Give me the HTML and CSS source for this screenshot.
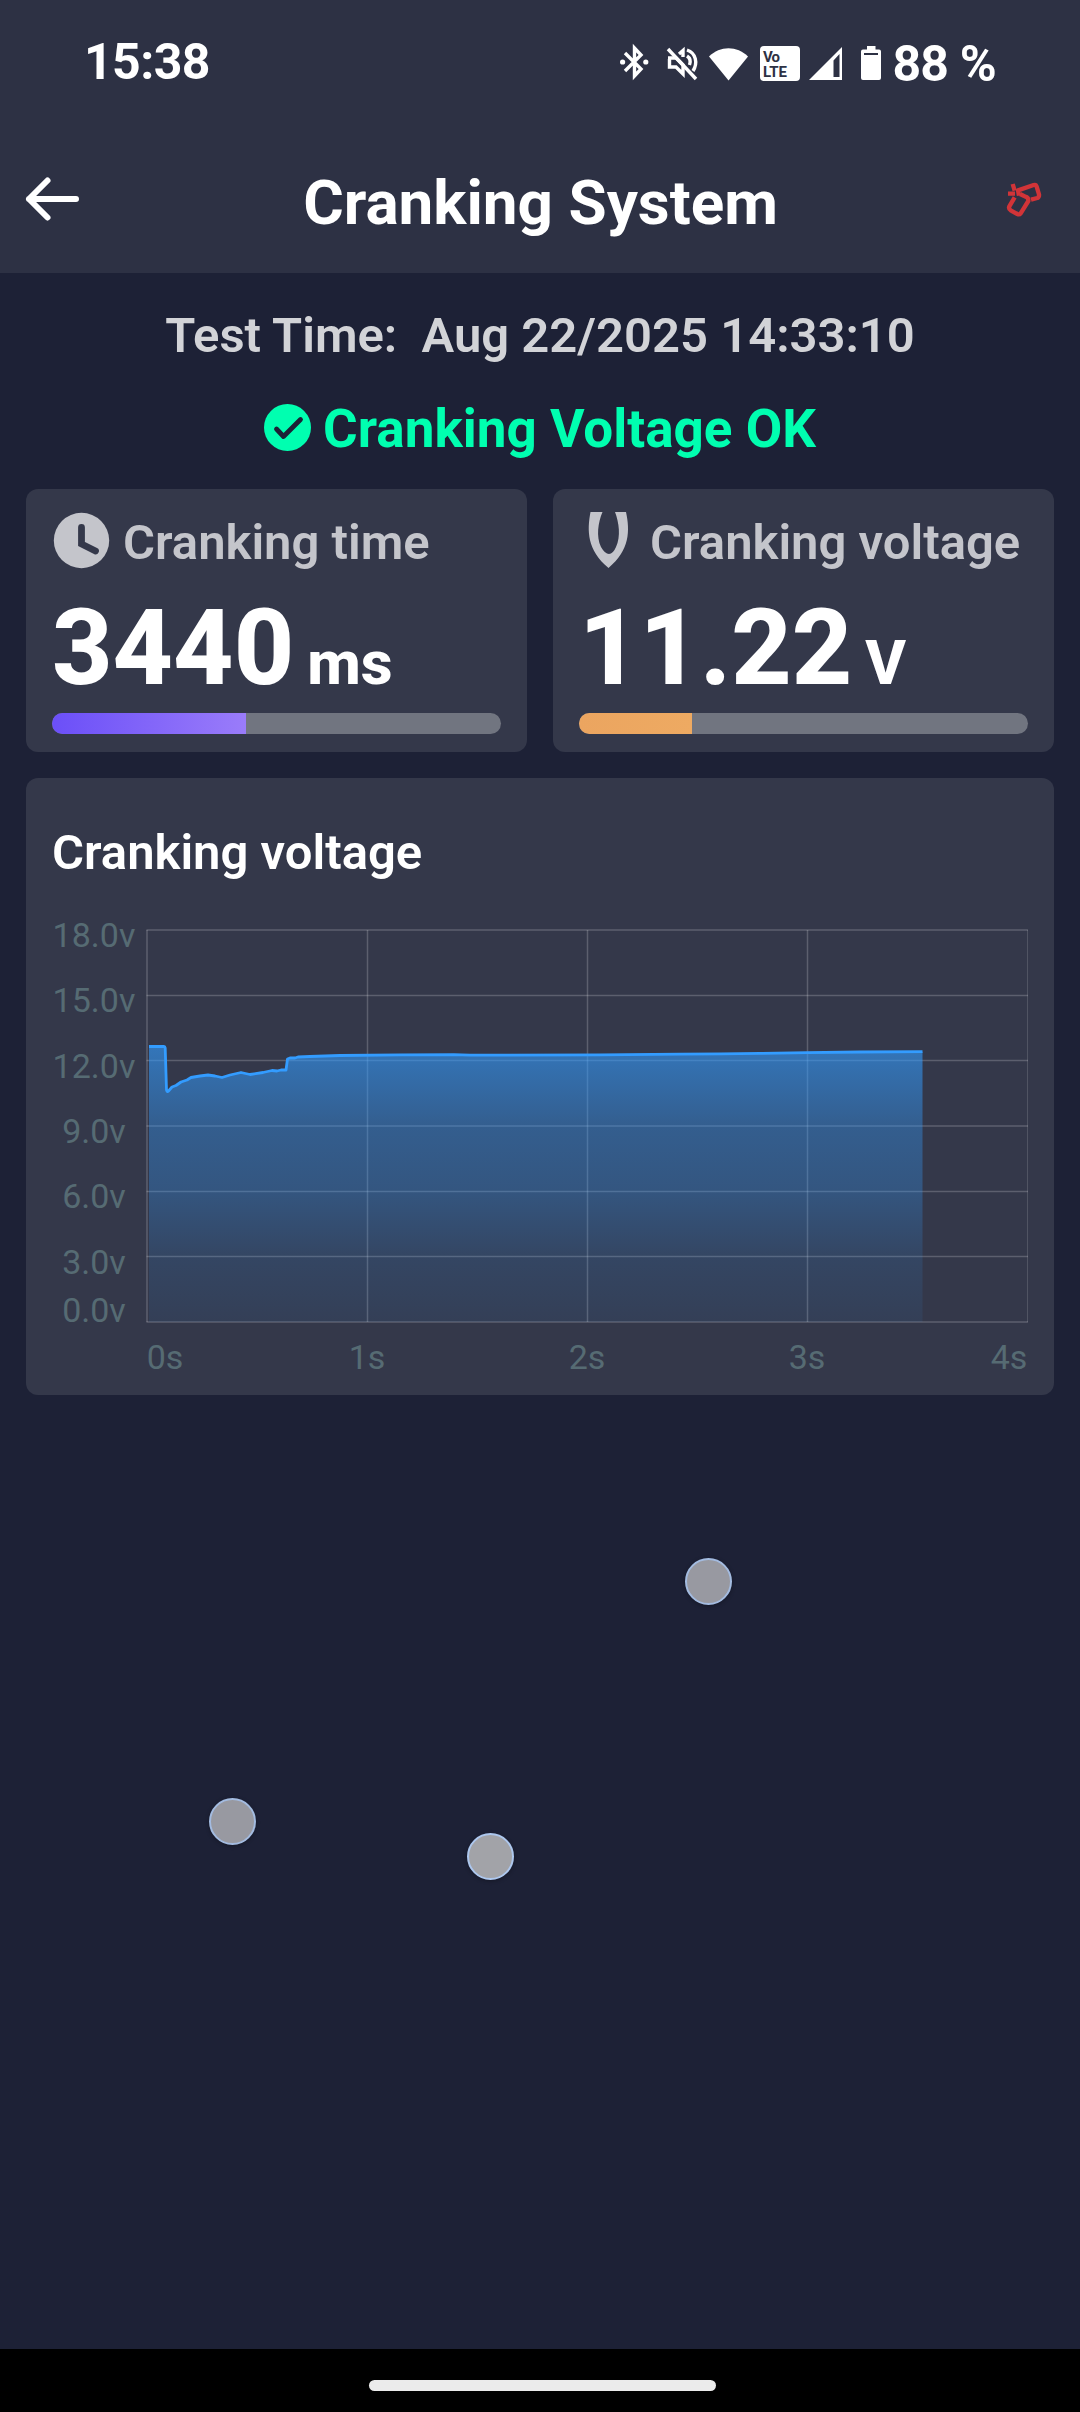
FILE: index.html
```html
<!DOCTYPE html>
<html lang="en">

<head>
    <meta charset="UTF-8">
    <meta name="viewport" content="width=device-width, initial-scale=1.0">
    <title>Cranking System</title>
    <link rel="stylesheet" href="styles.css">
</head>

<body>
    <div class="screen">
        <!-- Phone status bar -->
        <div class="status-bar">
            <span class="clock">15:38</span>
            <svg class="status-icons" viewBox="0 0 270 40" fill="#fff">
                <!-- Bluetooth -->
                <g fill="none" stroke="#fff" stroke-width="3.400">
                    <path d="M5 11 L21 27 L14.5 34 V6 L21 13 L5 29" />
                </g>
                <circle cx="2.6" cy="20" r="2.6" />
                <circle cx="25.8" cy="20" r="2.6" />
                <!-- Muted -->
                <g fill="none" stroke="#fff" stroke-width="3.400">
                    <path d="M48 7 L76 37" />
                    <path d="M48 16 H56 L63 23 V32 L56 25 H49.5 V17" />
                    <path d="M59 12 L63 8.5 V15" />
                    <path d="M67 8 C76 11 78 21 73 29" />
                    <path d="M67 14 C70 16 71 19 69.500 23" />
                </g>
                <!-- Wifi -->
                <path d="M89 14.500 C100 3.500 117 3.500 128 14.500 L108.500 38.500 Z" />
                <!-- VoLTE -->
                <rect x="140" y="4" width="40" height="35" rx="4" />
                <g class="volte">
                    <text x="143" y="19.500" textLength="17">Vo</text>
                    <text x="143" y="35" textLength="24">LTE</text>
                </g>
                <!-- Signal -->
                <path fill-rule="evenodd" d="M222 5 V38 H189 Z M219.500 12 L213.500 18.500 V35 H219.500 Z" />
                <!-- Battery -->
                <path fill-rule="evenodd" d="M247 4 H255.500 V7.500 H259 Q261 7.500 261 9.500 V36 Q261 38 259 38 H243 Q241 38 241 36 V9.500 Q241 7.500 243 7.500 H247 Z M244 11 V13 H258 V11 Z" />
            </svg>
            <span class="battery">88 %</span>
        </div>

        <!-- Title bar -->
        <div class="title-bar">
            <svg class="back" viewBox="0 0 56 46" fill="none" stroke="#fff" stroke-width="6" stroke-linecap="round" stroke-linejoin="round">
                <path d="M23.500 4.500 L5 23 L23.500 41.500 M5 23 H52" />
            </svg>
            <h1>Cranking System</h1>
            <svg class="plug" viewBox="78 64 108 108" fill="none" stroke="#d13438" stroke-width="13" stroke-linejoin="round">
                <path d="M117 108 L114 92 L161 76 Q168 74 170 81 L177 104 Q178 112 172 115 L153 120" />
                <path d="M104 113 L88 140 Q85 147 92 152 L112 163 Q118 166 122 161 L145 124 Q146 113 136 111 L120 103" />
                <path d="M98 73 L104 93 M84 102 H105" />
            </svg>
        </div>

        <div class="content">
            <div class="test-time">Test Time:&nbsp; Aug 22/2025 14:33:10</div>

            <div class="result">
                <svg viewBox="0 0 47 47">
                    <circle cx="23.500" cy="23.500" r="23.500" fill="#00ffb0" />
                    <path d="M12.500 25 L19.500 32.500 L36.500 15.500" fill="none" stroke="#1d2136" stroke-width="4.800" stroke-linecap="round" stroke-linejoin="round" />
                </svg>
                <span>Cranking Voltage OK</span>
            </div>

            <div class="cards">
                <div class="card">
                    <div class="card-title">
                        <svg viewBox="0 0 60 60">
                            <circle cx="29.500" cy="28.500" r="27.700" fill="#c4c5cb" />
                            <path d="M29.500 15.500 V32 L43.500 39" fill="none" stroke="#34384a" stroke-width="6.800" stroke-linecap="round" />
                        </svg>
                        <span>Cranking time</span>
                    </div>
                    <div class="value">3440<span class="unit">ms</span></div>
                    <div class="bar">
                        <div class="fill purple" style="width: 43.200%"></div>
                    </div>
                </div>

                <div class="card">
                    <div class="card-title">
                        <svg viewBox="0 0 60 60">
                            <path d="M11.500 0 H23.500 C19 10.500 17 24.500 22 35 Q26 42 30 42 Q34 42 37 35 C42 24.500 40 10.500 36 0 H47 C51 18.500 51 38 29.500 56 C8 38 8 18.500 11.500 0 Z" fill="#c4c5cb" />
                        </svg>
                        <span>Cranking voltage</span>
                    </div>
                    <div class="value">11.22<span class="unit">V</span></div>
                    <div class="bar">
                        <div class="fill orange" style="width: 25.200%"></div>
                    </div>
                </div>
            </div>

            <div class="card chart-card">
                <h2>Cranking voltage</h2>
                <svg class="chart" viewBox="26 900 1028 494">
                    <defs>
                        <linearGradient id="area" gradientUnits="userSpaceOnUse" x1="0" y1="1046" x2="0" y2="1322">
                            <stop offset="0" stop-color="#339cff" stop-opacity="0.620" />
                            <stop offset="0.290" stop-color="#339cff" stop-opacity="0.380" />
                            <stop offset="0.520" stop-color="#339cff" stop-opacity="0.300" />
                            <stop offset="0.760" stop-color="#339cff" stop-opacity="0.140" />
                            <stop offset="1" stop-color="#339cff" stop-opacity="0.070" />
                        </linearGradient>
                    </defs>
                    <g class="grid">
                        <path d="M146.500 930 H1028 M146.500 995.500 H1028 M146.500 1060.500 H1028 M146.500 1126 H1028 M146.500 1191.500 H1028 M146.500 1256.500 H1028 M146.500 1322 H1028" />
                        <path d="M147 930 V1322 M367.500 930 V1322 M587.500 930 V1322 M807.500 930 V1322" />
                        <path class="edge" d="M1027.500 930 V1322" />
                    </g>
                    <path fill="url(#area)" d="M149 1322 V1046.500 H165 L167 1092 L172 1087 L181 1082 L191 1077.500 L200 1076 L208 1075 L215 1076 L222 1077.500 L230 1075 L241 1072.500 L250 1074.500 L263 1072.500 L272 1070.500 L277 1071 L286 1070 L288 1058.500 L310 1056.500 L340 1055.500 L460 1055 L620 1054.500 L720 1053.500 L807 1052.700 L922.500 1051.800 V1322 Z" />
                    <path class="line" d="M149 1046.500 H164 Q165 1046.500 165.200 1048 L166.500 1090 Q167 1092.500 168.500 1091 L172 1087 L176 1085.500 L181 1082 L187 1080 L191 1077.500 L200 1076 L208 1075 L215 1076 L222 1077.500 L230 1075 L241 1072.500 L250 1074.500 L263 1072.500 L272 1070.500 L277 1071 L281 1070 L286 1070 L287.500 1059 L290 1058 L295 1058 L298 1057 L310 1056.500 L340 1055.500 L400 1054.800 L454 1054.600 L470 1055.200 L600 1054.800 L680 1054.200 L720 1053.800 L760 1053.400 L807 1052.700 L860 1052 L922.500 1051.600" />
                    <g class="labels">
                        <text x="94" y="947">18.0v</text>
                        <text x="94" y="1012">15.0v</text>
                        <text x="94" y="1078">12.0v</text>
                        <text x="94" y="1143">9.0v</text>
                        <text x="94" y="1208">6.0v</text>
                        <text x="94" y="1274">3.0v</text>
                        <text x="94" y="1322">0.0v</text>
                        <text x="165" y="1369">0s</text>
                        <text x="367" y="1369">1s</text>
                        <text x="587" y="1369">2s</text>
                        <text x="807" y="1369">3s</text>
                        <text x="1009" y="1369">4s</text>
                    </g>
                </svg>
            </div>
        </div>

        <!-- Gesture bar -->
        <div class="nav-bar">
            <div class="handle"></div>
        </div>

        <!-- Touch pointers over the page -->
        <div class="touch touch-1"></div>
        <div class="touch touch-2"></div>
        <div class="touch touch-3"></div>
    </div>
</body>

</html>
```

FILE: styles.css
```css
* {
    box-sizing: border-box;
}

body {
    margin: 0;
    background: #1d2136;
    color: #fff;
    font-family: Roboto, "Liberation Sans", sans-serif;
}

svg {
    display: block;
    flex: none;
}

.screen {
    position: relative;
    display: flex;
    flex-direction: column;
    width: 1080px;
    height: 2412px;
    overflow: hidden;
}

/* Status bar */
.status-bar {
    display: flex;
    align-items: center;
    height: 124px;
    padding: 0 84px 0 84px;
    background: #2d3144;
    font-size: 50px;
    font-weight: 700;
    letter-spacing: -0.6px;
}

.battery {
    padding-top: 3px;
    letter-spacing: -0.8px;
}

.status-icons {
    width: 270px;
    height: 40px;
    margin-left: auto;
    margin-right: 2px;
    letter-spacing: 0;
}

.volte {
    fill: #2d3144;
    font-size: 15px;
    font-weight: 700;
}

/* Title bar */
.title-bar {
    display: flex;
    align-items: center;
    justify-content: space-between;
    height: 149px;
    padding: 0 38px 0 24px;
    background: #2d3144;
}

.title-bar h1 {
    margin: 7px 5px 0 0;
    font-size: 62px;
    font-weight: 700;
}

.back {
    width: 56px;
    height: 46px;
}

.plug {
    width: 36px;
    height: 36px;
}

/* Content */
.content {
    flex: 1;
    padding: 0 26px;
}

.test-time {
    margin-top: 34px;
    height: 58px;
    line-height: 58px;
    text-align: center;
    color: #d2d3d7;
    font-size: 49px;
    font-weight: 650;
}

.result {
    display: flex;
    justify-content: center;
    align-items: center;
    gap: 12px;
    margin-top: 34px;
    height: 60px;
    color: #00ffb0;
    font-size: 53px;
    font-weight: 680;
}

.result svg {
    width: 47px;
    height: 47px;
    margin-bottom: 4px;
}

.cards {
    display: grid;
    grid-template-columns: 1fr 1fr;
    gap: 26px;
    margin-top: 30px;
}

.card {
    height: 263px;
    padding: 21px 26px 0;
    border-radius: 12px;
    background: #34384a;
}

.card-title {
    display: flex;
    align-items: center;
    gap: 11px;
    height: 64px;
    color: #c4c5cb;
    font-size: 49px;
    font-weight: 650;
    white-space: nowrap;
}

.card-title svg {
    width: 60px;
    height: 60px;
}

.value {
    height: 124px;
    padding-top: 13px;
    line-height: 124px;
    font-size: 105px;
    font-weight: 850;
}

.unit {
    margin-left: 13px;
    font-size: 62px;
}

.bar {
    height: 21px;
    margin-top: 15px;
    border-radius: 10.5px;
    background: #717580;
    overflow: hidden;
}

.fill {
    height: 100%;
}

.purple {
    background: linear-gradient(to right, #6b4ff8, #9a7cfa);
}

.orange {
    background: linear-gradient(to right, #eba560, #eeaa62);
}

/* Chart */
.chart-card {
    height: 617px;
    margin-top: 26px;
    padding: 0;
}

.chart-card h2 {
    height: 122px;
    margin: 0;
    padding: 46px 26px 0;
    font-size: 49px;
    font-weight: 650;
    line-height: 58px;
}

.chart {
    width: 1028px;
    height: 494px;
}

.grid {
    fill: none;
    stroke: #fff;
    stroke-opacity: 0.2;
    stroke-width: 1.5;
}

.edge {
    stroke-opacity: 0.14;
    stroke-width: 1;
}

.line {
    fill: none;
    stroke: #339cff;
    stroke-width: 2.8;
    stroke-linejoin: round;
}

.labels {
    fill: #566b73;
    font-size: 34px;
    text-anchor: middle;
}

/* Gesture bar */
.nav-bar {
    display: flex;
    justify-content: center;
    align-items: center;
    height: 63px;
    padding: 10px 0 0 5px;
    background: #000;
}

.handle {
    width: 347px;
    height: 11px;
    border-radius: 5.5px;
    background: #ebebeb;
}

/* Touch pointers */
.touch {
    position: absolute;
    width: 47px;
    height: 47px;
    border: 2px solid #a3bbe0;
    border-radius: 50%;
    background: #9899a1;
    box-shadow: 0 1px 4px rgba(0, 0, 0, 0.3);
}

.touch-1 {
    left: 685px;
    top: 1558px;
}

.touch-2 {
    left: 209px;
    top: 1798px;
}

.touch-3 {
    left: 467px;
    top: 1833px;
    border-color: #adc7ee;
    background: #a2a3a8;
}
```
